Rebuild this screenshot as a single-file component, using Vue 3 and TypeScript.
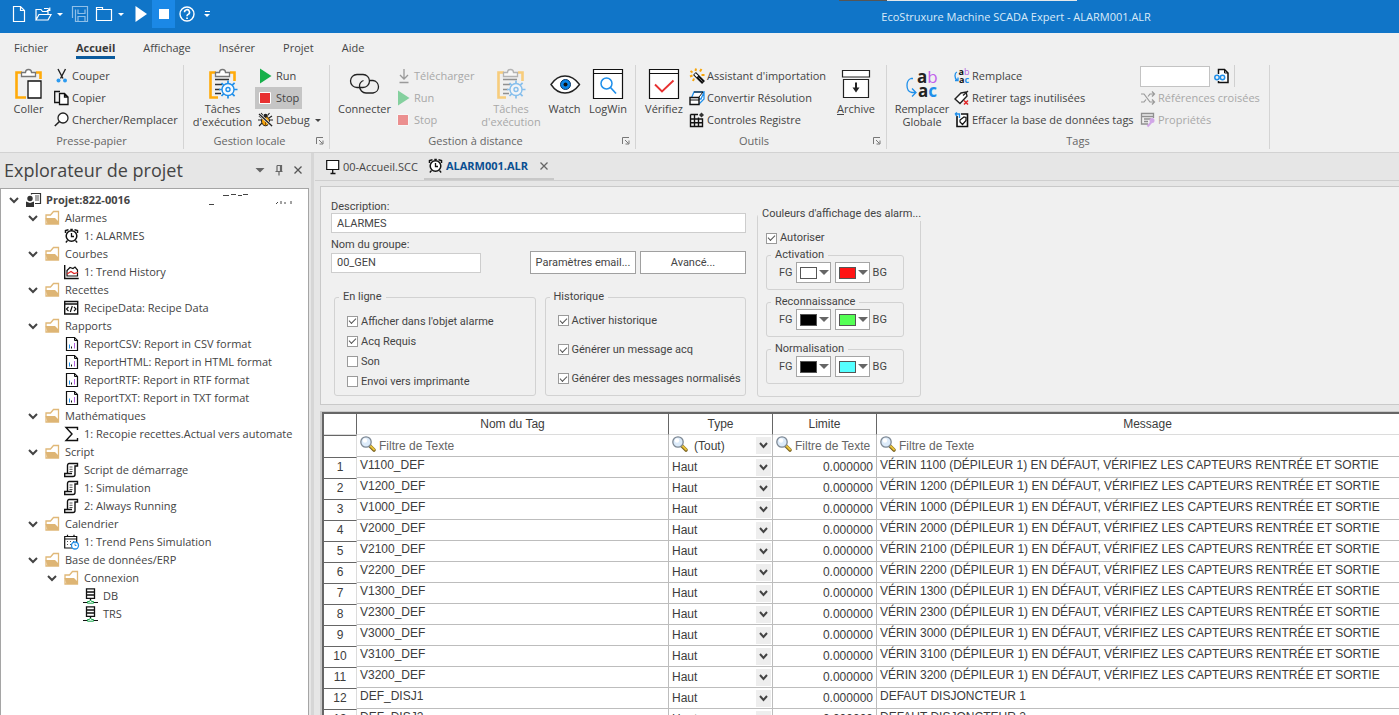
<script setup lang="ts">
import { ref } from 'vue'

interface Command { icon: string; label: string; disabled?: boolean; active?: boolean; menu?: boolean }
interface TreeNode { level: number; icon: string; label: string; folder?: boolean }
interface Check { label: string; on: boolean }
interface ColorPair { label: string; fg: string; bg: string }
interface AlarmRow { tag: string; type: string; limit: string; message: string }

const clipboard = (gear: boolean): string =>
  '<path d="M9 4.500H3.500V29.500H' + (gear ? '11' : '13') + 'M23 4.500h4.500V' + (gear ? '13' : '11') + '" fill="none" stroke="#ffab0a" stroke-width="2.600"/>' +
  '<path d="M8.500 8.500V4.500h4a3 3 0 0 1 6 0h4v4z" fill="#fff" stroke="#777" stroke-width="1.300"/>'

const gear =
  '<path d="M21 12.500v3M21 27v3.500M12 21.500h3M27 21.500h3.500M14.500 15l2.300 2.300M25.300 25.800l2.300 2.300M14.500 28l2.300-2.300M25.300 17.200l2.300-2.300" stroke="#1f8fea" stroke-width="1.700"/>' +
  '<circle cx="21" cy="21.500" r="6" fill="#f4f9fe" stroke="#1f8fea" stroke-width="1.400"/><circle cx="21" cy="21.500" r="2" fill="none" stroke="#1f8fea" stroke-width="1.400"/>'

const reportPage =
  '<path d="M2.500 1.500h8l3 3V14.500h-11z" fill="#fff" stroke="#111" stroke-width="1.200"/><path d="M10.500 1.500v3h3" fill="none" stroke="#111"/>' +
  '<path d="M5.500 8.500v4" stroke="#1f8fea"/><path d="M7.500 10.500v2" stroke="#111"/><path d="M10.500 7v5.500" stroke="#b45fe0"/>'

const smallIcons: Record<string, string> = {
  newdoc: '<path d="M2.500 .5h7l4 4v11h-11z M9.500 .5v4h4" fill="none" stroke="#fff" stroke-width="1.200"/>',
  open: '<path d="M1 14V3.500h5l1.500 2H13V8M1 14L4 8.500h12L13 14z M9 2.500h4l1.500 1.500M14.800 1.500V4.500h-3" fill="none" stroke="#fff" stroke-width="1.200"/>',
  save: '<path d="M.5 12V.5H15.500V15.500H3.500V3.500M6 3.500v4h7v-4M6 15.500v-5h7v5" fill="none" stroke="#8fbfe8" stroke-width="1.200"/>',
  window: '<path d="M.5 14.500V1.500H6.500V3.500h9v11z M.5 3.500h6" fill="none" stroke="#fff" stroke-width="1.200"/>',
  qplay: '<path d="M2.500 0l11.500 8-11.500 8z" fill="#fff"/>',
  qstop: '<path d="M3 3h10v10H3z" fill="#fff"/>',
  help: '<circle cx="8" cy="8" r="7" fill="none" stroke="#fff" stroke-width="1.400"/><path d="M5.500 6.200a2.500 2.500 0 1 1 3.600 2.200C8.300 8.800 8 9 8 10.200" fill="none" stroke="#fff" stroke-width="1.600"/><path d="M7.200 11.400h1.700v1.500H7.200z" fill="#fff"/>',
  cut: '<path d="M4 1l5 9.500M11.500 1L6.500 10.500" stroke="#222" stroke-width="1.400" fill="none"/><circle cx="4.500" cy="12.500" r="2" fill="#2d9bf0"/><circle cx="11" cy="12.500" r="2" fill="#2d9bf0"/>',
  copy: '<path d="M5 12.500H.7V1.500H6" fill="none" stroke="#111" stroke-width="1.300"/><path d="M5.500 3.500h5l3.500 3.500v7.500H5.500z M10.500 3.500V7H14" fill="#fff" stroke="#111" stroke-width="1.300"/>',
  search: '<circle cx="9" cy="6" r="5" fill="#fff" stroke="#222" stroke-width="1.300"/><path d="M5.500 9.500L.8 14" stroke="#222" stroke-width="1.600"/>',
  run: '<path d="M2 .5L13.500 8 2 15.500z" fill="#17b04b"/>',
  stop: '<path d="M1.500 2.500h11v11h-11z" fill="#e83131" stroke="#fff" stroke-width="1"/>',
  debug: '<path d="M5 3.500L3 1M9.500 3.500l2-2.500M4 8H0M10.500 8H15M4 11l-3 3M11 11l3 3M4 6L1 4M11 6l3-2" stroke="#222" stroke-width="1.200"/><ellipse cx="7.500" cy="9" rx="4" ry="4.800" fill="#f7a50c" stroke="#222"/><path d="M7.500 5v9" stroke="#8a5200"/><circle cx="7.500" cy="3.800" r="2" fill="#222"/><path d="M1 2l13 12" stroke="#f0f0f0" stroke-width="2.600"/><path d="M1 2l13 12" stroke="#222" stroke-width="1.300"/>',
  download: '<path d="M8 1v10M4 7l4 4 4-4M3.500 14.500h9" fill="none" stroke="#444" stroke-width="1.300"/>',
  wand: '<path d="M5.500 5.500l9 9" stroke="#111" stroke-width="4"/><path d="M6 6l2.500 2.500" stroke="#fff" stroke-width="2"/><path d="M9.500 9.500l4 4" stroke="#777" stroke-width="1"/><path d="M1.500 3l2 1.500M7 .5L6.500 3M12.500 1L11 3.500M1 8.500l2.500-1M4 13l1-2.500M12.500 7h3" stroke="#f7a50c" stroke-width="2"/>',
  convert: '<path d="M5 2h10l-3 7H2z M15 2v7l-5 5M2 9v2" fill="#fff" stroke="#1f8fea" stroke-width="1.300"/><path d="M1 7.500h9v7H1z" fill="#fff" stroke="#111" stroke-width="1.400"/><path d="M1 10h9M5 2h9L10 7" stroke="#111" fill="none"/>',
  registry: '<path d="M1.500 2.500v12h12V7H1.500M1.500 2.500H9M1.500 10.800h12M5.500 2.500v12M9.500 5.500v9" fill="none" stroke="#111" stroke-width="1.400"/><path d="M12.500 .5L15 3 12.500 5.500 10 3z" fill="#333"/>',
  replace: '<text x="4.500" y="7" font-family="Open Sans, sans-serif" font-size="9" font-weight="700" fill="#111">a<tspan font-weight="400" fill="#b45fe0">b</tspan></text><text x="5" y="15" font-family="Open Sans, sans-serif" font-size="9" font-weight="700" fill="#111">a<tspan fill="#1f8fea">c</tspan></text><path d="M3 4C.3 5 .3 10 3 12M1 12.500h3V9.500" fill="none" stroke="#1f8fea" stroke-width="1.300"/>',
  untag: '<path d="M1 9l6-6 5-1 1 4-7 7.500z" fill="#fff" stroke="#222" stroke-width="1.400"/><path d="M9 5.500L14 1" stroke="#222" stroke-width="1.300"/><path d="M10 10.500l4 4M14 10.500l-4 4" stroke="#e02525" stroke-width="1.500"/>',
  cleardb: '<path d="M3 4v10.500h10.500V2H7" fill="#fff" stroke="#111" stroke-width="1.600"/><path d="M6 8l4-3 2 .5v3l-3.500 4L6 10z" fill="#fff" stroke="#111" stroke-width="1.200"/><path d="M1 2h4.500v4M1 2l2-1.500M1 2l2 2" fill="none" stroke="#1f8fea" stroke-width="1.400"/>',
  finddoc: '<path d="M4.500 6V1.500h6l3.500 3.500v9.500H4.500V13" fill="#fff" stroke="#111" stroke-width="1.500"/><path d="M10.500 1.500V5H14" fill="none" stroke="#111"/><circle cx="3" cy="9.500" r="2.200" fill="#f0f0f0" stroke="#1f8fea" stroke-width="1.500"/><circle cx="8.500" cy="9.500" r="2.200" fill="#f0f0f0" stroke="#1f8fea" stroke-width="1.500"/>',
  crossref: '<path d="M1 4h3l6 8h4M1 12h3l2-2.500M8 6.500L10 4h4M12 1.500L14.500 4 12 6.500M12 9.500l2.500 2.500-2.500 2.500" fill="none" stroke="#444" stroke-width="1.200"/>',
  props: '<path d="M8 12H1.500V1.500h12V6M1.500 4.500h12M4 7h7M4 9.500h4" fill="none" stroke="#333" stroke-width="1.300"/><circle cx="12" cy="8.500" r="2.500" fill="#b45fe0"/><path d="M11.500 10l-4 4.500" stroke="#b45fe0" stroke-width="2"/>',
  project: '<path d="M5.500 2.500v-1h9v10H9" fill="#fff" stroke="#333" stroke-width="1.200"/><path d="M9 4h4M9 6h4M9 8h4" stroke="#555"/><circle cx="4" cy="6.500" r="2.700" fill="#333"/><path d="M0 9.500l4 1.500 4-1.500V15H0z" fill="#333"/>',
  folder: '<path d="M1 5h4.500l3-3.500h5V14H1z" fill="#fff" stroke="#e0b878" stroke-width="1.300"/><path d="M.5 8H10l3.500 3.500V14H2.500z" fill="#deb574"/>',
  alarm: '<circle cx="7.500" cy="8" r="5.300" fill="#fff" stroke="#111" stroke-width="1.500"/><path d="M7.500 5v3.500H10M3.500 12.500L1.800 14.500M11.500 12.500l1.700 2M6.300 1.500h2.500" stroke="#111" stroke-width="1.300" fill="none"/><path d="M1.500 5V2.500L4.500 1.800M13.500 5V2.500L10.500 1.800" stroke="#111" stroke-width="1.500" fill="none"/>',
  trend: '<path d="M.7 1v13.500h14" fill="none" stroke="#111" stroke-width="1.400"/><path d="M3 6.500l3-3 3 1 2-1.500 2.500 3v6H3z" fill="#fff" stroke="#111" stroke-width="1.200"/><path d="M3 10l4-2.500 3 2 4-1" fill="none" stroke="#e02525" stroke-width="1.200"/>',
  recipe: '<path d="M.7 1.500h13v12.500h-13zM.7 4h13" fill="#fff" stroke="#111" stroke-width="1.400"/><path d="M4.500 6.800L2.500 9l2 2.200M10 6.800L12 9l-2 2.200M8.300 6l-2 6" fill="none" stroke="#111" stroke-width="1.200"/>',
  report: reportPage,
  sigma: '<path d="M13.500 4V1.500H2L8 8l-6 6.500h11.500V12" fill="none" stroke="#111" stroke-width="1.400"/>',
  script: '<path d="M3.500 11.500V3.500C3.500 2 4.500 1.500 5 1.500h8.500V4H11v8.500c0 1.500-1 2-2 2H.7V11.500H8" fill="#fff" stroke="#111" stroke-width="1.400"/><path d="M5.500 5h3M5.500 7.300h3M5.500 9.500h3" stroke="#555"/>',
  calendar: '<path d="M.7 2.500h12v11.500h-12zM.7 5h12M3.500 .8v2M10 .8v2" fill="#fff" stroke="#111" stroke-width="1.200"/><path d="M3 7.500h8M3 10.500h8" stroke="#555" stroke-dasharray="1 2"/><circle cx="11" cy="11.500" r="3.500" fill="#fff" stroke="#1f8fea" stroke-width="1.300"/><path d="M11 9.500v2h1.500" fill="none" stroke="#1f8fea"/>',
  db: '<path d="M3.500 .8h8v9.500h-8zM3.500 4h8M3.500 7h8M7.500 10.500v2" fill="#fff" stroke="#111" stroke-width="1.300"/><path d="M0 14.500h15" stroke="#111"/><path d="M4.500 15.200v-1.700h2l1-1.500 1 1.500h2v1.700z" fill="#fff" stroke="#18a34a"/>',
  screen: '<path d="M1.700 1.500h12v9h-12z" fill="#fff" stroke="#111" stroke-width="1.200"/><path d="M7.700 10.500v3.500M5.500 14.500h5" stroke="#111" stroke-width="1.300"/>',
  lens: '<path d="M9.500 9.500l4.500 4.500" stroke="#7a6320" stroke-width="3.600" stroke-linecap="round"/><path d="M10 9.500l4 4" stroke="#e8c23c" stroke-width="2" stroke-linecap="round"/><circle cx="6" cy="6" r="5.200" fill="#dcebfa" stroke="#7d8894" stroke-width="1.300"/><circle cx="5" cy="4.500" r="2.200" fill="#fff"/>',
}

const bigIcons: Record<string, string> = {
  paste: clipboard(false) + '<path d="M15 13h13v17H15z" fill="#fff" stroke="#111" stroke-width="1.300"/>',
  tasks: clipboard(true) + '<path d="M8 11.500h14M8 16.500h7M8 21.500h5M8 25.500h6" stroke="#333" stroke-width="1.300"/>' + gear,
  connect: '<g fill="none" stroke="#222" stroke-width="1.300"><rect x="1.500" y="6.500" width="19" height="13" rx="6.500"/><path d="M14.500 12.500c-2.500 1-4 3-4 5.500 0 4 3 7 6.500 7h7a6.300 6.300 0 0 0 0-12.500h-3"/></g>',
  watch: '<path d="M2 16.500C7 9 11.500 8 16 8s9 1 14.500 8.500C25 24 20.500 25 16 25S7 24 2 16.500z" fill="#fff" stroke="#222" stroke-width="1.400"/><circle cx="16.500" cy="16.500" r="5" fill="#0a84e8" stroke="#0a3564"/><circle cx="16.500" cy="16.500" r="2" fill="#111"/>',
  logwin: '<path d="M1.500 1.500h29v29h-29z M1.500 5.500h29" fill="#fff" stroke="#111" stroke-width="1.200"/><circle cx="14.500" cy="15.500" r="5.500" fill="none" stroke="#1f8fea" stroke-width="1.500"/><path d="M18.500 19.500l5.500 6" stroke="#1f8fea" stroke-width="1.700"/>',
  verify: '<path d="M1.500 1.500h29v29h-29z M1.500 5.500h29" fill="#fff" stroke="#111" stroke-width="1.200"/><path d="M7 16.500l7 7 11.500-11" fill="none" stroke="#e83131" stroke-width="1.900"/>',
  archive: '<path d="M2.500 2.500h27v6.500h-27zM3.500 11.500h25v18h-25z" fill="#fff" stroke="#222" stroke-width="1.200"/><path d="M16 14.500v6" stroke="#222" stroke-width="2"/><path d="M12.500 19.500h7L16 24.500z" fill="#222"/>',
  replace: '<text x="11" y="15" font-family="Open Sans, sans-serif" font-size="17" font-weight="700" fill="#222">a<tspan font-weight="400" fill="#c060ec">b</tspan></text><text x="12" y="29" font-family="Open Sans, sans-serif" font-size="17" font-weight="700" fill="#222">a<tspan fill="#1f8fea">c</tspan></text><path d="M7 10.500H5c-3 1-4 4-4 7 0 4 2 6.500 5 7h3.500M6 20.500l4 4-4 4" fill="none" stroke="#1f8fea" stroke-width="1.300"/>',
}

const menus = ['Fichier', 'Accueil', 'Affichage', 'Insérer', 'Projet', 'Aide']
const activeMenu = ref('Accueil')

const clipboardCommands: Command[] = [
  { icon: 'cut', label: 'Couper' },
  { icon: 'copy', label: 'Copier' },
  { icon: 'search', label: 'Chercher/Remplacer' },
]
const localCommands: Command[] = [
  { icon: 'run', label: 'Run' },
  { icon: 'stop', label: 'Stop', active: true },
  { icon: 'debug', label: 'Debug', menu: true },
]
const remoteCommands: Command[] = [
  { icon: 'download', label: 'Télécharger', disabled: true },
  { icon: 'run', label: 'Run', disabled: true },
  { icon: 'stop', label: 'Stop', disabled: true },
]
const toolCommands: Command[] = [
  { icon: 'wand', label: "Assistant d'importation" },
  { icon: 'convert', label: 'Convertir Résolution' },
  { icon: 'registry', label: 'Controles Registre' },
]
const tagCommands: Command[] = [
  { icon: 'replace', label: 'Remplace' },
  { icon: 'untag', label: 'Retirer tags inutilisées' },
  { icon: 'cleardb', label: 'Effacer la base de données tags' },
]
const referenceCommands: Command[] = [
  { icon: 'crossref', label: 'Références croisées', disabled: true },
  { icon: 'props', label: 'Propriétés', disabled: true },
]
const tagQuery = ref('')

const tree: TreeNode[] = [
  { level: 1, icon: 'folder', label: 'Alarmes', folder: true },
  { level: 2, icon: 'alarm', label: '1: ALARMES' },
  { level: 1, icon: 'folder', label: 'Courbes', folder: true },
  { level: 2, icon: 'trend', label: '1: Trend History' },
  { level: 1, icon: 'folder', label: 'Recettes', folder: true },
  { level: 2, icon: 'recipe', label: 'RecipeData: Recipe Data' },
  { level: 1, icon: 'folder', label: 'Rapports', folder: true },
  { level: 2, icon: 'report', label: 'ReportCSV: Report in CSV format' },
  { level: 2, icon: 'report', label: 'ReportHTML: Report in HTML format' },
  { level: 2, icon: 'report', label: 'ReportRTF: Report in RTF format' },
  { level: 2, icon: 'report', label: 'ReportTXT: Report in TXT format' },
  { level: 1, icon: 'folder', label: 'Mathématiques', folder: true },
  { level: 2, icon: 'sigma', label: '1: Recopie recettes.Actual vers automate' },
  { level: 1, icon: 'folder', label: 'Script', folder: true },
  { level: 2, icon: 'script', label: 'Script de démarrage' },
  { level: 2, icon: 'script', label: '1: Simulation' },
  { level: 2, icon: 'script', label: '2: Always Running' },
  { level: 1, icon: 'folder', label: 'Calendrier', folder: true },
  { level: 2, icon: 'calendar', label: '1: Trend Pens Simulation' },
  { level: 1, icon: 'folder', label: 'Base de données/ERP', folder: true },
  { level: 2, icon: 'folder', label: 'Connexion', folder: true },
  { level: 3, icon: 'db', label: 'DB' },
  { level: 3, icon: 'db', label: 'TRS' },
]

const description = ref('ALARMES')
const groupName = ref('00_GEN')
const online = ref<Check[]>([
  { label: "Afficher dans l'objet alarme", on: true },
  { label: 'Acq Requis', on: true },
  { label: 'Son', on: false },
  { label: 'Envoi vers imprimante', on: false },
])
const history = ref<Check[]>([
  { label: 'Activer historique', on: true },
  { label: 'Générer un message acq', on: true },
  { label: 'Générer des messages normalisés', on: true },
])
const allowColors = ref(true)
const colors = ref<ColorPair[]>([
  { label: 'Activation', fg: '#ffffff', bg: '#ff1414' },
  { label: 'Reconnaissance', fg: '#000000', bg: '#55ff55' },
  { label: 'Normalisation', fg: '#000000', bg: '#55ffff' },
])

const cylinders = ['1100', '1200', '1000', '2000', '2100', '2200', '1300', '2300', '3000', '3100', '3200']
const rows = ref<AlarmRow[]>([
  ...cylinders.map((n) => ({
    tag: `V${n}_DEF`,
    type: 'Haut',
    limit: '0.000000',
    message: `VÉRIN ${n} (DÉPILEUR 1) EN DÉFAUT, VÉRIFIEZ LES CAPTEURS RENTRÉE ET SORTIE`,
  })),
  ...[1, 2].map((n) => ({ tag: `DEF_DISJ${n}`, type: 'Haut', limit: '0.000000', message: `DEFAUT DISJONCTEUR ${n}` })),
])
</script>

<template>
  <div class="app">
    <header class="titlebar">
      <div class="quick">
        <button class="q" aria-label="Nouveau"><svg viewBox="0 0 16 16" v-html="smallIcons.newdoc" /></button>
        <button class="q split" aria-label="Ouvrir"><svg viewBox="0 0 16 16" v-html="smallIcons.open" /><i class="caret" /></button>
        <button class="q" aria-label="Enregistrer"><svg viewBox="0 0 16 16" v-html="smallIcons.save" /></button>
        <button class="q split" aria-label="Fenêtre"><svg viewBox="0 0 16 16" v-html="smallIcons.window" /><i class="caret" /></button>
        <button class="q" aria-label="Exécuter"><svg viewBox="0 0 16 16" v-html="smallIcons.qplay" /></button>
        <button class="q on" aria-label="Arrêter"><svg viewBox="0 0 16 16" v-html="smallIcons.qstop" /></button>
        <button class="q" aria-label="Aide"><svg viewBox="0 0 16 16" v-html="smallIcons.help" /></button>
        <button class="q more" aria-label="Personnaliser"><i class="dash" /><i class="caret" /></button>
      </div>
      <div class="apptitle">EcoStruxure Machine SCADA Expert - ALARM001.ALR</div>
      <div class="edge"><i /><i /></div>
    </header>

    <nav class="menu">
      <button v-for="m in menus" :key="m" :class="{ active: m === activeMenu }" @click="activeMenu = m">{{ m }}</button>
    </nav>

    <div class="ribbon">
      <section class="group g-clip">
        <div class="cells">
          <button class="big"><svg viewBox="0 0 32 32" v-html="bigIcons.paste" /><span>Coller</span></button>
          <div class="stack">
            <button v-for="c in clipboardCommands" :key="c.label" class="cmd"><svg viewBox="0 0 16 16" v-html="smallIcons[c.icon]" />{{ c.label }}</button>
          </div>
        </div>
        <footer><span>Presse-papier</span></footer>
      </section>

      <section class="group g-local">
        <div class="cells">
          <button class="big"><svg viewBox="0 0 32 32" v-html="bigIcons.tasks" /><span>Tâches<br>d'exécution</span></button>
          <div class="stack">
            <button v-for="c in localCommands" :key="c.label" class="cmd" :class="{ pressed: c.active }">
              <svg viewBox="0 0 16 16" v-html="smallIcons[c.icon]" />{{ c.label }}<i v-if="c.menu" class="caret" />
            </button>
          </div>
        </div>
        <footer><span>Gestion locale</span><button class="launch" aria-label="Options de gestion locale"><svg viewBox="0 0 8 8"><path d="M7 .5H.5V7M3 3l3.500 3.500M7 3.500V7H3.500" /></svg></button></footer>
      </section>

      <section class="group g-remote">
        <div class="cells">
          <button class="big"><svg viewBox="0 0 32 32" v-html="bigIcons.connect" /><span>Connecter</span></button>
          <div class="stack">
            <button v-for="c in remoteCommands" :key="c.label" class="cmd" :disabled="c.disabled"><svg viewBox="0 0 16 16" v-html="smallIcons[c.icon]" />{{ c.label }}</button>
          </div>
          <button class="big" disabled><svg viewBox="0 0 32 32" v-html="bigIcons.tasks" /><span>Tâches<br>d'exécution</span></button>
          <button class="big"><svg viewBox="0 0 32 32" v-html="bigIcons.watch" /><span>Watch</span></button>
          <button class="big"><svg viewBox="0 0 32 32" v-html="bigIcons.logwin" /><span>LogWin</span></button>
        </div>
        <footer><span>Gestion à distance</span><button class="launch" aria-label="Options de gestion à distance"><svg viewBox="0 0 8 8"><path d="M7 .5H.5V7M3 3l3.500 3.500M7 3.500V7H3.500" /></svg></button></footer>
      </section>

      <section class="group g-tools">
        <div class="cells">
          <button class="big"><svg viewBox="0 0 32 32" v-html="bigIcons.verify" /><span>Vérifiez</span></button>
          <div class="stack">
            <button v-for="c in toolCommands" :key="c.label" class="cmd"><svg viewBox="0 0 16 16" v-html="smallIcons[c.icon]" />{{ c.label }}</button>
          </div>
          <button class="big"><svg viewBox="0 0 32 32" v-html="bigIcons.archive" /><span><u>A</u>rchive</span></button>
        </div>
        <footer><span>Outils</span><button class="launch" aria-label="Options des outils"><svg viewBox="0 0 8 8"><path d="M7 .5H.5V7M3 3l3.500 3.500M7 3.500V7H3.500" /></svg></button></footer>
      </section>

      <section class="group g-tags">
        <div class="cells">
          <button class="big"><svg viewBox="0 0 32 32" v-html="bigIcons.replace" /><span>Remplacer<br>Globale</span></button>
          <div class="stack">
            <button v-for="c in tagCommands" :key="c.label" class="cmd"><svg viewBox="0 0 16 16" v-html="smallIcons[c.icon]" />{{ c.label }}</button>
          </div>
          <div class="stack">
            <div class="tagfind">
              <input v-model="tagQuery" type="text" aria-label="Rechercher un tag">
              <button aria-label="Trouver"><svg viewBox="0 0 16 16" v-html="smallIcons.finddoc" /></button>
            </div>
            <button v-for="c in referenceCommands" :key="c.label" class="cmd" :disabled="c.disabled"><svg viewBox="0 0 16 16" v-html="smallIcons[c.icon]" />{{ c.label }}</button>
          </div>
        </div>
        <footer><span>Tags</span></footer>
      </section>
    </div>

    <div class="body">
      <aside class="explorer">
        <div class="panelhead">
          <h1>Explorateur de projet</h1>
          <button aria-label="Menu du panneau"><svg viewBox="0 0 12 12"><path d="M1.500 4h9L6 8.500z" fill="#666" /></svg></button>
          <button aria-label="Épingler"><svg viewBox="0 0 12 12"><path d="M4 1.500h4.500V7M4 1.500V7M2.500 7.500h7M6 8v3.500M7.500 2v5" fill="none" stroke="#666" stroke-width="1.200" /></svg></button>
          <button aria-label="Fermer le panneau"><svg viewBox="0 0 12 12"><path d="M2.500 2.500l7 7M9.500 2.500l-7 7" fill="none" stroke="#555" stroke-width="1.300" /></svg></button>
        </div>
        <ul class="tree">
          <li class="node l0">
            <button class="twist" aria-label="Réduire le projet"><svg viewBox="0 0 10 10"><path d="M1 3l4 4 4-4" /></svg></button>
            <svg class="nicon" viewBox="0 0 16 16" v-html="smallIcons.project" />
            <b class="project">Projet:822-0016</b>
            <svg class="remnant" viewBox="0 0 160 16"><path d="M75 12.500h5M89 3.500h6M97 2.500h5M104 3.500h4M109 2.500h5M142 12l2-2M147 9v3M151 10v2M157 9v3" /></svg>
          </li>
          <li v-for="(n, i) in tree" :key="i" class="node" :class="'l' + n.level">
            <button v-if="n.folder" class="twist" :aria-label="'Réduire ' + n.label"><svg viewBox="0 0 10 10"><path d="M1 3l4 4 4-4" /></svg></button>
            <i v-else class="twist" />
            <svg class="nicon" viewBox="0 0 16 16" v-html="smallIcons[n.icon]" />
            <span>{{ n.label }}</span>
          </li>
        </ul>
      </aside>

      <div class="splitter" />

      <main class="editor">
        <div class="tabs">
          <button class="tab"><svg viewBox="0 0 16 16" v-html="smallIcons.screen" />00-Accueil.SCC</button>
          <div class="tab current">
            <button><svg viewBox="0 0 16 16" v-html="smallIcons.alarm" />ALARM001.ALR</button>
            <button aria-label="Fermer l'onglet"><svg class="x" viewBox="0 0 12 12"><path d="M2.500 2.500l7 7M9.500 2.500l-7 7" fill="none" stroke="#666" stroke-width="1.300" /></svg></button>
          </div>
        </div>

        <form class="settings" @submit.prevent>
          <div class="maincol">
            <label for="desc">Description:</label>
            <input id="desc" v-model="description" type="text">
            <label for="grp" class="second">Nom du groupe:</label>
            <div class="grouprow">
              <input id="grp" v-model="groupName" type="text">
              <span class="actions">
                <button type="button">Paramètres email...</button>
                <button type="button">Avancé...</button>
              </span>
            </div>
            <div class="boxes">
              <fieldset class="online">
                <legend>En ligne</legend>
                <label v-for="c in online" :key="c.label" class="check"><input v-model="c.on" type="checkbox">{{ c.label }}</label>
              </fieldset>
              <fieldset class="history">
                <legend>Historique</legend>
                <label v-for="c in history" :key="c.label" class="check"><input v-model="c.on" type="checkbox">{{ c.label }}</label>
              </fieldset>
            </div>
          </div>

          <fieldset class="colors">
            <legend>Couleurs d'affichage des alarm...</legend>
            <label class="check"><input v-model="allowColors" type="checkbox">Autoriser</label>
            <fieldset v-for="p in colors" :key="p.label" class="pair">
              <legend>{{ p.label }}</legend>
              <div class="pickers">
                <label>FG
                  <span class="picker">
                    <select v-model="p.fg"><option :value="p.fg" /></select>
                    <i class="swatch" :style="{ background: p.fg }" /><i class="drop" />
                  </span>
                </label>
                <label>
                  <span class="picker">
                    <select v-model="p.bg"><option :value="p.bg" /></select>
                    <i class="swatch" :style="{ background: p.bg }" /><i class="drop" />
                  </span>
                  BG</label>
              </div>
            </fieldset>
          </fieldset>
        </form>

        <div class="sheet">
          <table>
            <colgroup><col class="c-num"><col class="c-tag"><col class="c-type"><col class="c-lim"><col></colgroup>
            <thead>
              <tr><th /><th>Nom du Tag</th><th>Type</th><th>Limite</th><th>Message</th></tr>
              <tr class="filter">
                <th class="num" />
                <td><label class="find"><svg viewBox="0 0 16 16" v-html="smallIcons.lens" /><input type="text" placeholder="Filtre de Texte" aria-label="Filtrer les tags"></label></td>
                <td>
                  <label class="find typed">
                    <svg viewBox="0 0 16 16" v-html="smallIcons.lens" />
                    <span class="choice"><select aria-label="Filtrer par type"><option>(Tout)</option></select><svg viewBox="0 0 15 17"><path d="M4 6l3.500 4L11 6" /></svg></span>
                  </label>
                </td>
                <td><label class="find"><svg viewBox="0 0 16 16" v-html="smallIcons.lens" /><input type="text" placeholder="Filtre de Texte" aria-label="Filtrer les limites"></label></td>
                <td><label class="find"><svg viewBox="0 0 16 16" v-html="smallIcons.lens" /><input type="text" placeholder="Filtre de Texte" aria-label="Filtrer les messages"></label></td>
              </tr>
            </thead>
            <tbody>
              <tr v-for="(r, i) in rows" :key="r.tag">
                <th class="num">{{ i + 1 }}</th>
                <td class="txt">{{ r.tag }}</td>
                <td><span class="choice"><select v-model="r.type" :aria-label="'Type de ' + r.tag"><option>Haut</option></select><svg viewBox="0 0 15 17"><path d="M4 6l3.500 4L11 6" /></svg></span></td>
                <td class="lim">{{ r.limit }}</td>
                <td class="txt">{{ r.message }}</td>
              </tr>
            </tbody>
          </table>
        </div>
      </main>
    </div>
  </div>
</template>

<style>
html, body { margin: 0; height: 100%; overflow: hidden; }
</style>

<style scoped>
* { box-sizing: border-box; }
button, input, select { font: inherit; color: inherit; margin: 0; padding: 0; border: 0; background: none; border-radius: 0; }
button { cursor: default; white-space: nowrap; }
svg { display: block; flex: none; overflow: visible; }
.app { height: 100vh; display: flex; flex-direction: column; overflow: hidden; background: #e6e6e6; color: #444; font: 11px/14px "Open Sans", "Noto Sans", sans-serif; }
.caret { display: inline-block; border: 3px solid transparent; border-top-color: currentColor; border-bottom: 0; }

.titlebar { position: relative; flex: none; height: 33px; display: flex; background: #1075c8; color: #fff; }
.quick { flex: 0 0 63%; height: 28px; display: flex; padding-left: 7px; }
.q { width: 23px; display: flex; align-items: center; justify-content: center; }
.q svg { width: 16px; height: 16px; }
.q.split { width: 38px; gap: 6px; }
.q.on { background: #1b88e6; }
.q.more { flex-direction: column; gap: 2px; width: 18px; }
.dash { width: 5px; height: 1px; background: #fff; }
.apptitle { line-height: 33px; white-space: nowrap; color: #d9eaf8; }
.edge { position: absolute; top: 0; left: 60%; width: 17%; height: 1px; display: flex; }
.edge i { flex: 4; background: #e4e8ea; }
.edge i:first-child { flex: 1; background: #555; }

.menu { flex: none; display: flex; gap: 28px; padding: 6px 14px 0; background: #f0f0f0; height: 32px; }
.menu button { height: 20px; padding-bottom: 2px; }
.menu .active { font-weight: 700; border-bottom: 3px solid #0a5a9c; padding-bottom: 0; color: #3a3a3a; }

.ribbon { flex: none; display: flex; background: #f0f0f0; border-bottom: 1px solid #d2d2d2; height: 88px; }
.group { display: flex; flex-direction: column; border-right: 1px solid #d4d4d4; margin-bottom: 3px; }
.g-clip { width: 184px; }
.g-local { width: 146px; }
.g-remote { width: 306px; }
.g-tools { width: 251px; }
.g-tags { width: 383px; }
.cells { display: grid; padding-left: 6px; height: 67px; }
.g-clip .cells { grid-template-columns: 45px 1fr; }
.g-local .cells { grid-template-columns: 65px 1fr; }
.g-remote .cells { grid-template-columns: 57px 86px 64px 43px 44px; }
.g-tools .cells { grid-template-columns: 44px 146px 48px; }
.g-tags .cells { grid-template-columns: 58px 186px 1fr; }
.big { display: flex; flex-direction: column; align-items: center; padding-top: 3px; line-height: 13px; }
.big svg { width: 32px; height: 32px; margin-bottom: 2px; }
.stack { display: flex; flex-direction: column; align-items: flex-start; }
.cmd { height: 22px; display: flex; align-items: center; gap: 2px; padding: 0 3px; }
.cmd svg { width: 16px; height: 16px; }
.cmd .caret { margin-left: 3px; }
.pressed { background: #c5c5c5; }
button:disabled { color: #a8a8a8; }
button:disabled svg { opacity: .5; }
.tagfind { height: 22px; display: flex; align-items: center; gap: 4px; margin-left: 3px; padding-right: 4px; border-right: 1px solid #d0d0d0; }
.tagfind input { width: 70px; height: 21px; background: #fff; border: 1px solid #c3c3c3; padding: 0 3px; }
.tagfind svg { width: 16px; height: 16px; }
.group footer { flex: 1; display: flex; align-items: center; color: #666; }
.group footer span { flex: 1; text-align: center; }
.launch { width: 14px; padding-left: 1px; }
.launch svg { width: 8px; height: 8px; }
.launch path { fill: none; stroke: #777; }

.body { flex: 1; min-height: 0; display: flex; }
.explorer { flex: none; width: 309px; display: flex; flex-direction: column; }
.panelhead { height: 35px; flex: none; display: flex; align-items: center; gap: 7px; padding: 0 5px 1px 4px; }
.panelhead h1 { flex: 1; margin: 0; font-size: 18px; line-height: 24px; font-weight: 400; color: #444; }
.panelhead svg { width: 12px; height: 12px; }
.tree { flex: 1; margin: 0; padding: 2px 0 0; list-style: none; background: #fff; border: 1px solid #a5a5a5; border-bottom: 0; overflow: hidden; color: #444; }
.node { height: 18px; display: flex; align-items: center; white-space: nowrap; }
.l0 { padding-left: 4px; }
.l1 { padding-left: 23px; }
.l2 { padding-left: 42px; }
.l3 { padding-left: 61px; }
.twist { width: 18px; flex: none; display: flex; justify-content: center; }
.twist svg { width: 10px; height: 10px; }
.twist path { fill: none; stroke: #444; stroke-width: 2; }
.nicon { width: 16px; height: 16px; margin: 0 4px 0 3px; }
.project { width: 88px; }
.remnant { width: 160px; height: 16px; }
.remnant path { fill: none; stroke: #444; }
.splitter { flex: none; width: 3px; margin: 0 1px 0 2px; background: #d6d6d6; }

.editor { flex: 1; min-width: 0; display: flex; flex-direction: column; }
.tabs { flex: none; height: 28px; display: flex; align-items: stretch; border-bottom: 1px solid #cfcfcf; padding-left: 10px; }
.tab, .tab button { display: flex; align-items: center; gap: 2px; }
.tab { padding-right: 6px; height: 27px; }
.tab svg { width: 16px; height: 16px; }
.tab .x { width: 12px; height: 12px; }
.tab.current { gap: 10px; padding: 0 4px; border-bottom: 2px solid #c8c8c8; }
.tab.current button:first-child { font-weight: 700; color: #0a4f91; }
.settings { flex: none; display: flex; gap: 11px; margin: 5px 0 0 5px; border: 1px solid #c9c9c9; border-right: 0; background: #f0f0f0; padding: 13px 10px 7px; font: 11px/14px Roboto, "Liberation Sans", sans-serif; color: #444; }
.maincol { width: 415px; display: flex; flex-direction: column; line-height: 13px; }
.maincol input[type="text"] { height: 20px; background: #fff; border: 1px solid #cdcdcd; padding: 0 5px; }
.second { margin-top: 5px; }
.grouprow { display: flex; justify-content: space-between; align-items: center; }
.grouprow input { width: 150px; }
.actions { display: flex; gap: 4px; }
.actions button { width: 106px; height: 23px; background: #fff; border: 1px solid #a0a0a0; }
.boxes { display: flex; gap: 9px; margin: 16px 0 0 3px; }
fieldset { margin: 0; padding: 0; border: 1px solid #d2d2d2; border-radius: 3px; min-width: 0; }
legend { padding: 0 4px; margin-left: 4px; line-height: 14px; white-space: nowrap; }
.boxes fieldset { height: 106px; flex: 1; }
.online { padding-top: 7px; }
.online .check { height: 20px; }
.history { padding-top: 2px; }
.history .check { height: 29px; }
.check { display: flex; align-items: center; gap: 3px; white-space: nowrap; margin-left: 12px; }
.check input { appearance: none; width: 11px; height: 11px; background: #fff; border: 1px solid #9a9a9a; display: grid; place-items: center; flex: none; }
.check input:checked::after { content: ""; width: 6px; height: 3px; border: solid #555; border-width: 0 0 1px 1px; transform: rotate(-45deg); margin-bottom: 2px; }
.colors { width: 164px; height: 190px; margin-top: 7px; }
.colors > legend { margin-left: 0; }
.colors .check { height: 16px; margin: 9px 0 2px 8px; }
.pair { width: 138px; height: 42px; margin: 0 0 5px 8px; }
.pickers { display: flex; gap: 4px; padding-left: 12px; }
.pickers label { display: flex; align-items: center; gap: 3px; height: 21px; }
.picker { display: grid; grid-template-columns: 17px 9px; gap: 3px; width: 35px; height: 21px; padding: 0 1px 0 3px; align-items: center; background: #fff; border: 1px solid #a5a5a5; }
.picker select { grid-area: 1 / 1 / 2 / 3; appearance: none; height: 19px; width: 100%; }
.swatch { grid-area: 1 / 1; height: 12px; border: 1px solid #555; pointer-events: none; }
.drop { grid-area: 1 / 2; justify-self: center; border: 5px solid transparent; border-top-color: #666; border-bottom: 0; pointer-events: none; }

.sheet { flex: 1; min-height: 0; overflow: hidden; margin: 6px 0 0 5px; border: 1px solid #c9c9c9; border-width: 1px 0 0 2px; }
table { width: calc(100% + 20px); table-layout: fixed; border-spacing: 0; border: solid #666; border-width: 2px 0 0 2px; background: #fff; font: 12px/16px "Liberation Sans", Arial, sans-serif; color: #3c3c3c; }
.c-num { width: 33px; }
.c-tag { width: 312px; }
.c-type, .c-lim { width: 104px; }
th, td { padding: 0; height: 21px; border: solid #bdbdbd; border-width: 0 1px 1px 0; white-space: nowrap; overflow: hidden; }
th { font-weight: 400; border-color: #dcdcdc; }
thead tr:first-child th { border-right-color: #666; }
.filter td { height: 22px; }
tbody .num, .filter .num { border-top: 1px solid #666; border-bottom: 0; padding-bottom: 2px; }
.txt { vertical-align: top; padding-left: 3px; }
.lim { text-align: right; padding-right: 3px; }
.find { display: flex; align-items: center; gap: 3px; padding-left: 3px; }
.find > svg { width: 16px; height: 16px; margin-bottom: 3px; }
.find input { flex: 1; min-width: 0; height: 18px; }
.find input::placeholder { color: #666; opacity: 1; }
.choice { flex: 1; display: grid; grid-template-columns: 1fr 15px; align-items: center; padding: 0 1px 0 3px; }
.choice select { grid-area: 1 / 1 / 2 / 3; appearance: none; height: 17px; width: 100%; }
.choice svg { grid-area: 1 / 2; width: 15px; height: 17px; background: #eee; pointer-events: none; }
.choice path { fill: none; stroke: #444; stroke-width: 2; }
</style>
